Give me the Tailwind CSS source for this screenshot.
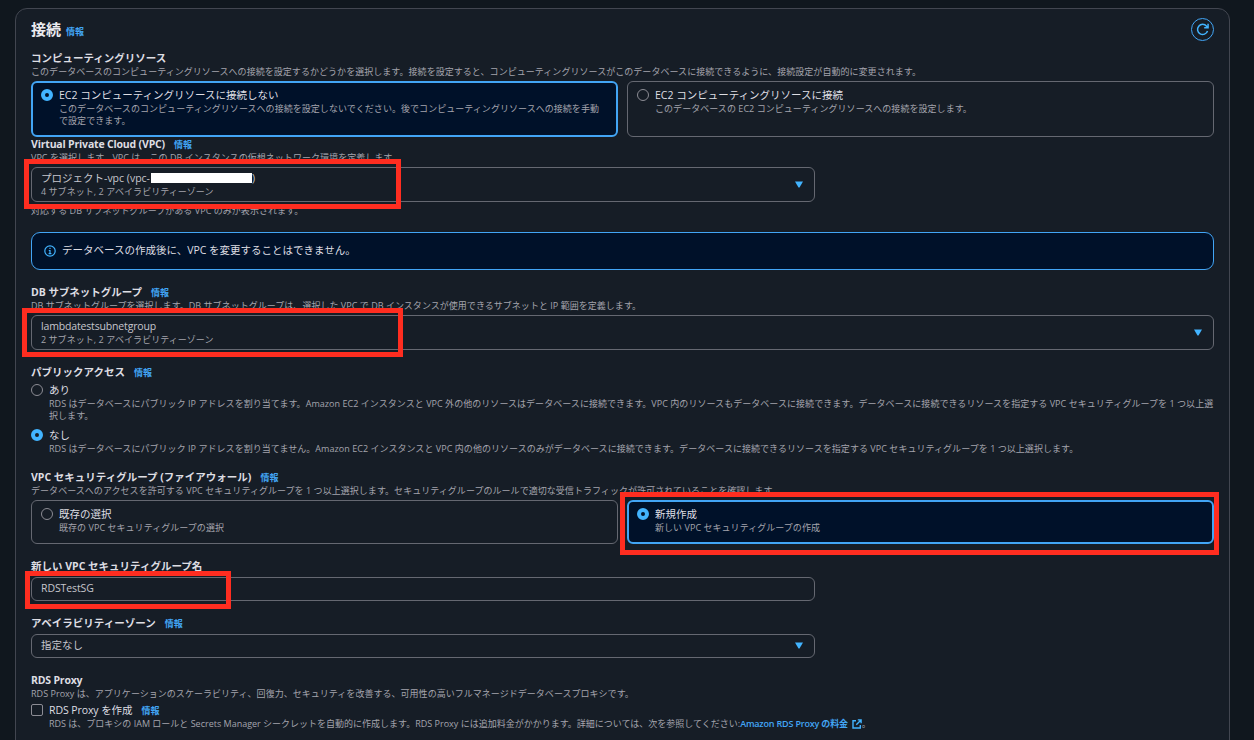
<!DOCTYPE html>
<html lang="ja">
<head>
<meta charset="utf-8">
<title>接続</title>
<script src="https://cdn.jsdelivr.net/npm/@tailwindcss/browser@4"></script>
</head>
<body class="relative h-[740px] w-[1254px] overflow-hidden bg-[#10171e] font-['Open_Sans','Noto_Sans_CJK_JP',sans-serif] text-[10.5px] leading-[15px] text-[#dedee3]">
<main class="mt-2 ml-[15px] h-[760px] w-[1215px] rounded-xl border border-[#424650] bg-[#161d26] px-[15px] pt-[9px]">
  <header class="flex h-6 items-start justify-between">
    <div class="flex items-baseline gap-[5px]">
      <h1 class="text-[15px] leading-[22px] font-bold text-[#ebebf0]">接続</h1>
      <a class="text-[9px] font-bold text-[#42a5f5]">情報</a>
    </div>
    <button class="flex size-[23px] items-center justify-center rounded-full border border-[#42a5f5]">
      <svg class="size-[13px]" viewBox="0 0 14 14" fill="none" stroke="#42b4ff" stroke-width="1.6"><path d="M12.4 8.6A5.5 5.5 0 1 1 11.4 3.4L12.6 4.8M13 .8V5H8.8"/></svg>
    </button>
  </header>

  <section class="mt-[9px]">
    <h2 class="h-[15px] font-bold">コンピューティングリソース</h2>
    <p class="h-3 text-[9px] leading-3 tracking-[0.045px] text-[#a4a4ad]">このデータベースのコンピューティングリソースへの接続を設定するかどうかを選択します。接続を設定すると、コンピューティングリソースがこのデータベースに接続できるように、接続設定が自動的に変更されます。</p>
    <div class="mt-[3px] grid grid-cols-2 gap-[9px]">
      <div class="flex h-14 gap-1.5 rounded-md border-2 border-[#42a5f5] bg-[#001129] pt-[5px] pr-3 pl-2">
        <span class="mt-px size-3 shrink-0 rounded-full border-4 border-[#42b4ff] bg-[#001129]"></span>
        <div>
          <div class="h-[15px]">EC2 コンピューティングリソースに接続しない</div>
          <p class="text-[9px] leading-3 tracking-[0.045px] whitespace-nowrap text-[#a4a4ad]">このデータベースのコンピューティングリソースへの接続を設定しないでください。後でコンピューティングリソースへの接続を手動<br>で設定できます。</p>
        </div>
      </div>
      <div class="flex h-14 gap-1.5 rounded-md border border-[#656871] pt-1.5 pl-[9px]">
        <span class="mt-px size-3 shrink-0 rounded-full border border-[#8c8c94]"></span>
        <div>
          <div class="h-[15px]">EC2 コンピューティングリソースに接続</div>
          <p class="text-[9px] leading-3 tracking-[0.045px] text-[#a4a4ad]">このデータベースの EC2 コンピューティングリソースへの接続を設定します。</p>
        </div>
      </div>
    </div>
  </section>

  <section>
    <div class="flex h-[15px] items-baseline gap-[9px]"><h2 class="font-bold tracking-[-0.18px]">Virtual Private Cloud (VPC)</h2><a class="text-[9px] font-bold text-[#42a5f5]">情報</a></div>
    <p class="h-3 text-[9px] leading-3 tracking-[0.045px] text-[#a4a4ad]">VPC を選択します。VPC は、この DB インスタンスの仮想ネットワーク環境を定義します。</p>
    <div class="mt-[3px] flex h-[35px] w-[784px] items-center justify-between rounded-md border border-[#656871] pr-[11px] pl-[9px]">
      <div>
        <div class="flex h-[15px] items-start text-[#c6c6cd]"><span class="w-[110px] whitespace-nowrap">プロジェクト-vpc (vpc-</span><span class="mt-0.5 h-[10px] w-[101px] bg-white"></span><span>)</span></div>
        <div class="h-3 text-[9px] leading-3 tracking-[0.045px] text-[#a4a4ad]">4 サブネット, 2 アベイラビリティーゾーン</div>
      </div>
      <svg class="-mt-px h-[7px] w-2" viewBox="0 0 8 7" fill="#42b4ff"><path d="M0 .5h8L4.5 6.5h-1z"/></svg>
    </div>
    <p class="mt-[3px] h-3 text-[9px] leading-3 tracking-[0.045px] text-[#a4a4ad]">対応する DB サブネットグループがある VPC のみが表示されます。</p>
    <div class="mt-[15px] flex h-[38px] items-center gap-1.5 rounded-[9px] border border-[#42a5f5] bg-[#001129] pl-3">
      <svg class="size-3" viewBox="0 0 12 12" fill="none" stroke="#42b4ff" stroke-width="1.2"><circle cx="6" cy="6" r="5.2"/><path d="M6 2.8v1.3M4.8 5.5H6v3M4.6 8.6h2.8"/></svg>
      <span class="pb-0.5">データベースの作成後に、VPC を変更することはできません。</span>
    </div>
  </section>

  <section class="mt-[15px]">
    <div class="flex h-[15px] items-baseline gap-[9px]"><h2 class="font-bold tracking-[-0.04px]">DB サブネットグループ</h2><a class="text-[9px] font-bold text-[#42a5f5]">情報</a></div>
    <p class="h-3 text-[9px] leading-3 tracking-[0.03px] text-[#a4a4ad]">DB サブネットグループを選択します。DB サブネットグループは、選択した VPC で DB インスタンスが使用できるサブネットと IP 範囲を定義します。</p>
    <div class="mt-[3px] flex h-[35px] items-center justify-between rounded-md border border-[#656871] pr-[11px] pl-[9px]">
      <div>
        <div class="h-[15px] tracking-[-0.16px] text-[#c6c6cd]">lambdatestsubnetgroup</div>
        <div class="h-3 text-[9px] leading-3 tracking-[0.045px] text-[#a4a4ad]">2 サブネット, 2 アベイラビリティーゾーン</div>
      </div>
      <svg class="-mt-px h-[7px] w-2" viewBox="0 0 8 7" fill="#42b4ff"><path d="M0 .5h8L4.5 6.5h-1z"/></svg>
    </div>
  </section>

  <section class="mt-[15px]">
    <div class="flex h-[15px] items-baseline gap-[9px]"><h2 class="font-bold">パブリックアクセス</h2><a class="text-[9px] font-bold text-[#42a5f5]">情報</a></div>
    <div class="mt-[3px] flex h-[39px] gap-1.5">
      <span class="mt-px size-3 shrink-0 rounded-full border border-[#8c8c94]"></span>
      <div>
        <div class="h-[15px]">あり</div>
        <p class="text-[9px] leading-3 tracking-[0.045px] whitespace-nowrap text-[#a4a4ad]">RDS はデータベースにパブリック IP アドレスを割り当てます。Amazon EC2 インスタンスと VPC 外の他のリソースはデータベースに接続できます。VPC 内のリソースもデータベースに接続できます。データベースに接続できるリソースを指定する VPC セキュリティグループを 1 つ以上選<br>択します。</p>
      </div>
    </div>
    <div class="mt-1.5 flex h-[27px] gap-1.5">
      <span class="mt-px size-3 shrink-0 rounded-full border-4 border-[#42b4ff]"></span>
      <div>
        <div class="h-[15px]">なし</div>
        <p class="text-[9px] leading-3 tracking-[0.045px] whitespace-nowrap text-[#a4a4ad]">RDS はデータベースにパブリック IP アドレスを割り当てません。Amazon EC2 インスタンスと VPC 内の他のリソースのみがデータベースに接続できます。データベースに接続できるリソースを指定する VPC セキュリティグループを 1 つ以上選択します。</p>
      </div>
    </div>
  </section>

  <section class="mt-[15px]">
    <div class="flex h-[15px] items-baseline gap-[9px]"><h2 class="font-bold">VPC セキュリティグループ (ファイアウォール)</h2><a class="text-[9px] font-bold text-[#42a5f5]">情報</a></div>
    <p class="h-3 text-[9px] leading-3 tracking-[0.045px] text-[#a4a4ad]">データベースへのアクセスを許可する VPC セキュリティグループを 1 つ以上選択します。セキュリティグループのルールで適切な受信トラフィックが許可されていることを確認します。</p>
    <div class="mt-[3px] grid grid-cols-2 gap-[9px]">
      <div class="flex h-11 gap-1.5 rounded-md border border-[#656871] pt-1.5 pl-[9px]">
        <span class="mt-px size-3 shrink-0 rounded-full border border-[#8c8c94]"></span>
        <div>
          <div class="h-[15px]">既存の選択</div>
          <p class="text-[9px] leading-3 tracking-[0.045px] text-[#a4a4ad]">既存の VPC セキュリティグループの選択</p>
        </div>
      </div>
      <div class="flex h-11 gap-1.5 rounded-md border-2 border-[#42a5f5] bg-[#001129] pt-[5px] pl-2">
        <span class="mt-px size-3 shrink-0 rounded-full border-4 border-[#42b4ff]"></span>
        <div>
          <div class="h-[15px]">新規作成</div>
          <p class="text-[9px] leading-3 tracking-[0.045px] text-[#a4a4ad]">新しい VPC セキュリティグループの作成</p>
        </div>
      </div>
    </div>
  </section>

  <section class="mt-[15px]">
    <h2 class="h-[15px] font-bold">新しい VPC セキュリティグループ名</h2>
    <div class="mt-[3px] flex h-6 w-[784px] items-center rounded-md border border-[#656871] pb-0.5 pl-[9px] tracking-[-0.1px] text-[#c6c6cd]">RDSTestSG</div>
  </section>

  <section class="mt-[15px]">
    <div class="flex h-[15px] items-baseline gap-[9px]"><h2 class="font-bold">アベイラビリティーゾーン</h2><a class="text-[9px] font-bold text-[#42a5f5]">情報</a></div>
    <div class="mt-[3px] flex h-6 w-[784px] items-center justify-between rounded-md border border-[#656871] pr-[11px] pl-[9px] text-[#c6c6cd]">
      <span class="pb-0.5">指定なし</span>
      <svg class="-mt-px h-[7px] w-2" viewBox="0 0 8 7" fill="#42b4ff"><path d="M0 .5h8L4.5 6.5h-1z"/></svg>
    </div>
  </section>

  <section class="mt-[15px]">
    <h2 class="h-[15px] font-bold tracking-[-0.2px]">RDS Proxy</h2>
    <p class="h-3 text-[9px] leading-3 tracking-[0.03px] text-[#a4a4ad]">RDS Proxy は、アプリケーションのスケーラビリティ、回復力、セキュリティを改善する、可用性の高いフルマネージドデータベースプロキシです。</p>
    <div class="mt-[3px] flex gap-1.5">
      <span class="mt-px size-3 shrink-0 rounded-xs border border-[#8c8c94]"></span>
      <div>
        <div class="flex h-[15px] items-baseline gap-[9px]"><span class="tracking-[-0.08px]">RDS Proxy を作成</span><a class="text-[9px] font-bold text-[#42a5f5]">情報</a></div>
        <p class="flex h-3 text-[9px] leading-3 whitespace-nowrap text-[#a4a4ad]"><span>RDS は、プロキシの IAM ロールと Secrets Manager シークレットを自動的に作成します。RDS Proxy には追加料金がかかります。詳細については、次を参照してください:</span><a class="flex items-center gap-1 font-semibold tracking-[-0.18px] text-[#42a5f5]">Amazon RDS Proxy の料金<svg class="size-[10px]" viewBox="0 0 10 10" fill="none" stroke="#42b4ff" stroke-width="1.4"><path d="M4 1.7H1v7.3h7.3V6M5.8 .9h3.3v3.3M9 1 4.3 5.7"/></svg></a><span>。</span></p>
      </div>
    </div>
  </section>
</main>

<div class="absolute top-[159px] left-[24px] h-[50px] w-[377px] border-5 border-[#ff2d20]"></div>
<div class="absolute top-[308px] left-[22px] h-[49px] w-[381px] border-5 border-[#ff2d20]"></div>
<div class="absolute top-[492px] left-[620px] h-[63px] w-[599px] border-5 border-[#ff2d20]"></div>
<div class="absolute top-[571px] left-[25px] h-[38px] w-[206px] border-5 border-[#ff2d20]"></div>
</body>
</html>
